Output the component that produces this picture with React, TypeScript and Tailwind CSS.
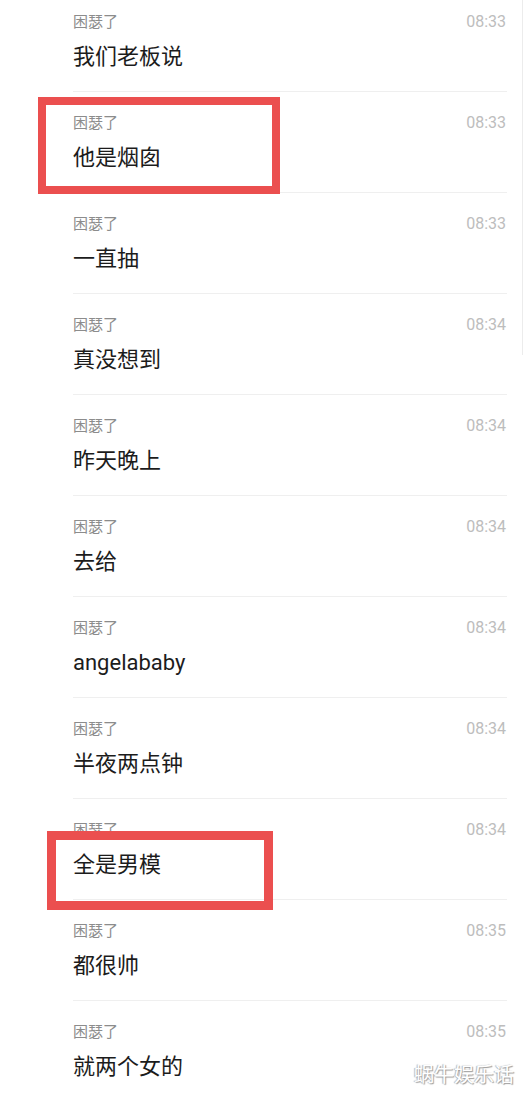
import React from 'react';

const messages = [
  { text: '我们老板说', time: '08:33' },
  { text: '他是烟囱', time: '08:33' },
  { text: '一直抽', time: '08:33' },
  { text: '真没想到', time: '08:34' },
  { text: '昨天晚上', time: '08:34' },
  { text: '去给', time: '08:34' },
  { text: 'angelababy', time: '08:34' },
  { text: '半夜两点钟', time: '08:34' },
  { text: '全是男模', time: '08:34' },
  { text: '都很帅', time: '08:35' },
  { text: '就两个女的', time: '08:35' },
];

const App = () => {
  return (
    <div
      className="relative w-[524px] h-[1100px] overflow-hidden bg-white"
      style={{ fontFamily: 'Roboto, "Noto Sans CJK SC", sans-serif' }}
    >
      {/* scroll track on the right edge */}
      <div className="absolute right-[1px] top-0 w-px h-[355px] bg-[#ececec]" />

      <ul className="-mt-[9px] pl-[73px] pr-[17px]">
        {messages.map((m, i) => (
          <li key={i} className="relative border-b border-[#efefef] pt-[21px] pb-[19px]">
            <div className="flex items-center justify-between h-[20px]">
              <span className="text-[15px] text-[#8c8c8c]">困瑟了</span>
              <span className="text-[16px] text-[#bdbdbd] pr-px">{m.time}</span>
            </div>
            <div className="mt-[10px] h-[30px] leading-[30px] text-[22px] text-[#1c1c1c]">{m.text}</div>

            {/* red highlight frames drawn over the screenshot */}
            {i === 1 && (
              <div className="absolute -left-[35px] top-[5px] w-[242px] h-[97px] border-[8px] border-[#eb4f4f]" />
            )}
            {i === 8 && (
              <div className="absolute -left-[26px] top-[32px] w-[226px] h-[79px] border-[9px] border-[#eb4f4f]" />
            )}
          </li>
        ))}
      </ul>

      {/* watermark */}
      <div
        className="absolute right-[10px] bottom-[13px] text-[20px] leading-[24px] text-white"
        style={{ textShadow: '1px 1px 1px #9a9a9a, -1px 0 1px #b0b0b0' }}
      >
        蜗牛娱乐话
      </div>
    </div>
  );
};

export default App;
